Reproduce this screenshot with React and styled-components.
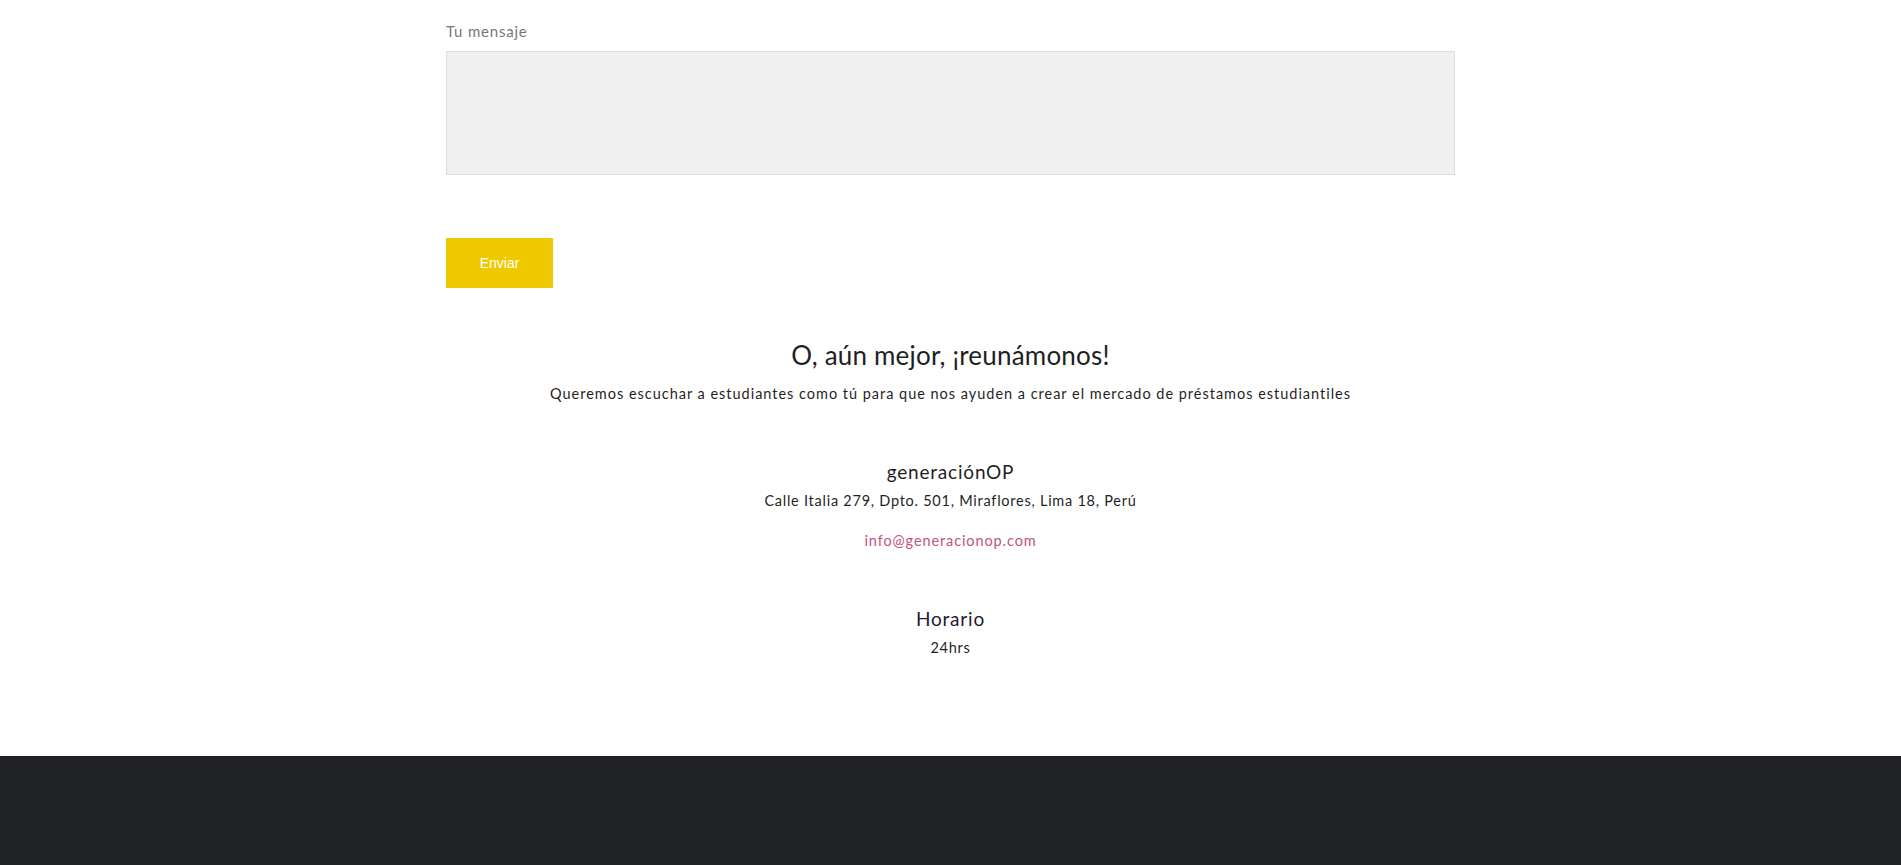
import React from "react";
import styled, { createGlobalStyle } from "styled-components";

const GlobalStyle = createGlobalStyle`
  body {
    margin: 0;
    background: #fff;
    font-family: "Lato", "Noto Sans", sans-serif;
    color: #1f1f1f;
  }
`;

const Page = styled.div`
  display: flex;
  flex-direction: column;
`;

const Form = styled.form`
  width: 1009px;
  margin: 0 auto;
  padding-top: 20px;
  display: flex;
  flex-direction: column;
  align-items: flex-start;
`;

const Label = styled.label`
  font-size: 15px;
  letter-spacing: 0.8px;
  color: #777;
  line-height: 22px;
  margin-bottom: 9px;
`;

const TextArea = styled.textarea`
  box-sizing: border-box;
  width: 100%;
  height: 124px;
  background: #f0f0f0;
  border: 1px solid #ddd;
  resize: none;
  outline: none;
`;

const SendButton = styled.button`
  margin-top: 63px;
  width: 107px;
  height: 50px;
  border: none;
  background: #efc900;
  color: #fff;
  font-family: "Liberation Sans", Arial, sans-serif;
  font-size: 14px;
  cursor: pointer;
`;

const Meet = styled.section`
  display: flex;
  flex-direction: column;
  align-items: center;
  padding: 50px 0 97px;
  text-align: center;
`;

const Heading = styled.h2`
  margin: 0;
  font-weight: 400;
  font-size: 26px;
  line-height: 34px;
  letter-spacing: 0.2px;
  color: #1f1f1f;
`;

const Lead = styled.p`
  margin: 11px 0 0;
  font-size: 14.5px;
  line-height: 22px;
  letter-spacing: 0.98px;
`;

const Block = styled.div`
  display: flex;
  flex-direction: column;
  align-items: center;
  margin-top: ${(p) => p.$top}px;
`;

const BlockTitle = styled.h3`
  margin: 0;
  font-weight: 400;
  font-size: 19px;
  line-height: 26px;
  letter-spacing: 0.8px;
  color: ${(p) => p.$color || "#1f1f1f"};
`;

const Line = styled.p`
  margin: ${(p) => p.$gap || 0}px 0 0;
  font-size: 14.5px;
  line-height: 22px;
  letter-spacing: 0.75px;
`;

const Mail = styled.a`
  margin-top: 18px;
  font-size: 14.5px;
  line-height: 22px;
  letter-spacing: 0.9px;
  color: #c4517f;
  text-decoration: none;
`;

const Footer = styled.footer`
  background: #202125;
  height: 220px;
`;

export default function App() {
  return (
    <Page>
      <GlobalStyle />
      <Form onSubmit={(e) => e.preventDefault()}>
        <Label htmlFor="msg">Tu mensaje</Label>
        <TextArea id="msg" />
        <SendButton type="submit">Enviar</SendButton>
      </Form>
      <Meet>
        <Heading>O, aún mejor, ¡reunámonos!</Heading>
        <Lead>
          Queremos escuchar a estudiantes como tú para que nos ayuden a crear el
          mercado de préstamos estudiantiles
        </Lead>
        <Block $top={54}>
          <BlockTitle>generaciónOP</BlockTitle>
          <Line $gap={5}>Calle Italia 279, Dpto. 501, Miraflores, Lima 18, Perú</Line>
          <Mail href="#">info@generacionop.com</Mail>
        </Block>
        <Block $top={54}>
          <BlockTitle $color="#231a30">Horario</BlockTitle>
          <Line $gap={5}>24hrs</Line>
        </Block>
      </Meet>
      <Footer />
    </Page>
  );
}
